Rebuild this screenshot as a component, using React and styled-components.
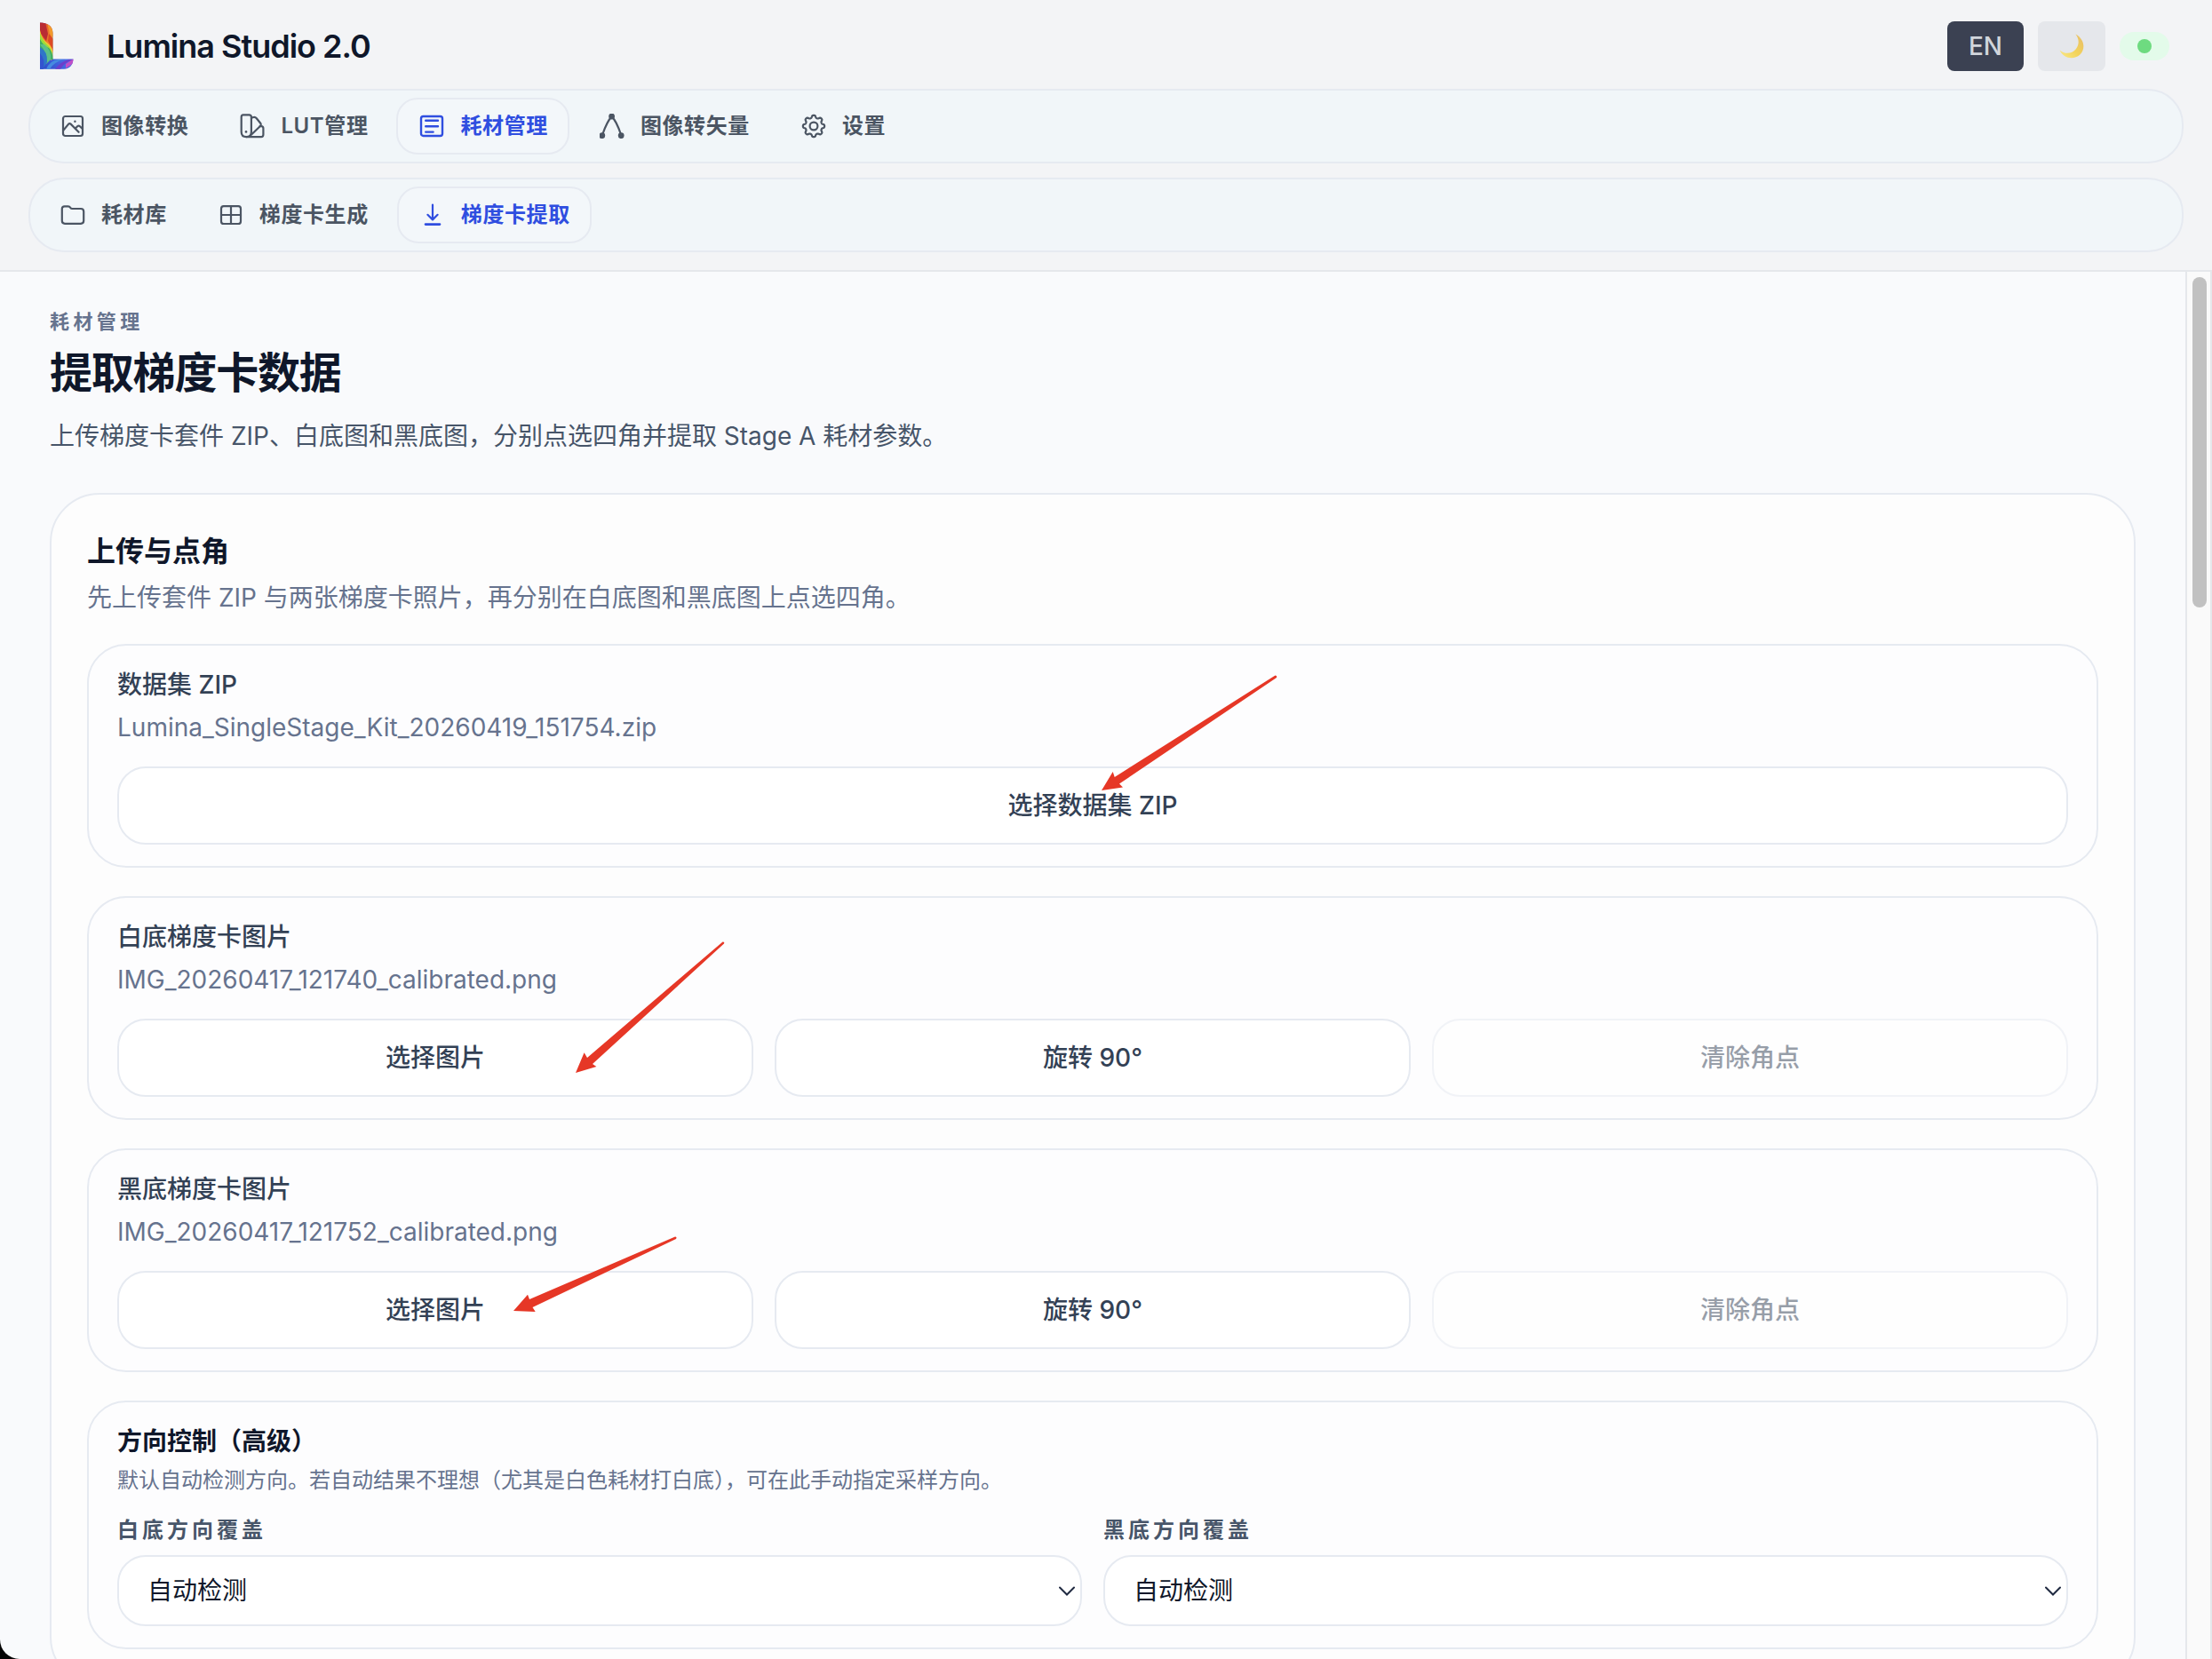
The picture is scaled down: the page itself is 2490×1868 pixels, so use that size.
import React, { useState } from "react";
import styled, { createGlobalStyle, css } from "styled-components";

const colors = {
  header: "#f3f4f6",
  nav: "#f1f6f9",
  navActive: "#f3f7fa",
  line: "#e6eaf1",
  divider: "#e5e7eb",
  page: "#f9fafc",
  card: "#fdfdfd",
  panel: "#fdfdfe",
  ink: "#0f172a",
  strong: "#334155",
  body: "#475569",
  muted: "#66738e",
  tab: "#4b5563",
  active: "#2f4ee0",
  arrow: "#e63726",
};

const GlobalStyle = createGlobalStyle`
  *, *::before, *::after { box-sizing: border-box; }
  body {
    margin: 0;
    background: #050505;
    color: ${colors.ink};
    font-family: Inter, "Noto Sans CJK SC", sans-serif;
    -webkit-font-smoothing: antialiased;
  }
  h1, h2, h3, p { margin: 0; }
  button, select { font: inherit; color: inherit; margin: 0; }
`;

/* ---------- shell ---------- */

const Shell = styled.div`
  position: relative;
  display: flex;
  flex-direction: column;
  height: 100vh;
  overflow: hidden;
  background: ${colors.page};
  border-bottom-left-radius: 22px;
`;

const Header = styled.header`
  display: flex;
  flex-direction: column;
  gap: 16px;
  padding: 24px 32px 20px;
  background: ${colors.header};
  border-bottom: 2px solid ${colors.divider};
`;

const TopRow = styled.div`
  display: flex;
  align-items: center;
  justify-content: space-between;
  padding: 0 16px 4px 0;
`;

const Brand = styled.div`
  display: flex;
  align-items: center;
  gap: 24px;
`;

const BrandName = styled.span`
  font-size: 36px;
  line-height: 56px;
  font-weight: 600;
  letter-spacing: -1px;
`;

const Actions = styled.div`
  display: flex;
  align-items: center;
  gap: 16px;
`;

const ActionButton = styled.button`
  display: flex;
  align-items: center;
  justify-content: center;
  height: 56px;
  padding: 0 24px;
  border: 0;
  border-radius: 8px;
  font-size: 28px;
  line-height: 40px;
  font-weight: 500;
  color: #d1d5db;
  background: ${(p) => (p.$dark ? "#3b4152" : "#e5e7eb")};
`;

const StatusPill = styled.span`
  display: flex;
  align-items: center;
  justify-content: center;
  width: 56px;
  height: 32px;
  border-radius: 16px;
  background: #e3fbea;
`;

const StatusDot = styled.span`
  width: 16px;
  height: 16px;
  border-radius: 50%;
  background: #6edb80;
`;

const NavBar = styled.nav`
  display: flex;
  gap: 8px;
  padding: 8px;
  border: 2px solid ${colors.line};
  border-radius: 40px;
  background: ${colors.nav};
`;

const NavItem = styled.button`
  display: flex;
  align-items: center;
  gap: 18px;
  height: 64px;
  padding: 0 22px 0 24px;
  border: 2px solid transparent;
  border-radius: 24px;
  background: transparent;
  color: ${colors.tab};
  font-size: 24px;
  line-height: 32px;
  font-weight: 600;
  letter-spacing: 0.025em;
  white-space: nowrap;

  ${(p) =>
    p.$active &&
    css`
      border-color: ${colors.line};
      background: ${colors.navActive};
      color: ${colors.active};
    `}
`;

/* ---------- page ---------- */

const Body = styled.div`
  display: flex;
  flex: 1;
  min-height: 0;
`;

const Main = styled.main`
  flex: 1;
  min-width: 0;
  overflow: hidden;
  padding: 40px 56px;
`;

const Track = styled.div`
  width: 30px;
  padding: 6px;
  border: solid ${colors.divider};
  border-width: 0 2px;
  background: #fafafa;
`;

const Thumb = styled.div`
  width: 16px;
  height: 24%;
  border-radius: 8px;
  background: #c1c1c1;
`;

const PageHead = styled.div`
  display: flex;
  flex-direction: column;
  margin-bottom: 40px;
`;

const Eyebrow = styled.p`
  font-size: 22px;
  line-height: 32px;
  font-weight: 600;
  letter-spacing: 0.2em;
  color: ${colors.muted};
`;

const PageTitle = styled.h1`
  padding: 12px 0 17px;
  font-size: 48px;
  line-height: 60px;
  font-weight: 700;
  letter-spacing: -0.025em;
`;

const Lead = styled.p`
  font-size: 28px;
  line-height: 48px;
  color: ${colors.body};
`;

const Card = styled.section`
  display: flex;
  flex-direction: column;
  gap: 32px;
  padding: 40px;
  border: 2px solid ${colors.line};
  border-radius: 56px;
  background: ${colors.card};
`;

const CardHead = styled.div`
  display: flex;
  flex-direction: column;
  gap: 8px;
`;

const CardTitle = styled.h2`
  font-size: 32px;
  line-height: 48px;
  font-weight: 600;
`;

const CardText = styled.p`
  font-size: 28px;
  line-height: 40px;
  color: ${colors.muted};
`;

const Panel = styled.div`
  display: flex;
  flex-direction: column;
  gap: 24px;
  padding: 24px 32px;
  border: 2px solid ${colors.line};
  border-radius: 44px;
  background: ${colors.panel};
`;

const PanelHead = styled.div`
  display: flex;
  flex-direction: column;
  gap: 8px;
`;

const PanelLabel = styled.h3`
  font-size: 28px;
  line-height: 40px;
  font-weight: ${(p) => (p.$bold ? 600 : 500)};
  color: ${(p) => (p.$bold ? colors.ink : colors.strong)};
`;

const PanelNote = styled.p`
  font-size: 24px;
  line-height: 32px;
  color: ${colors.muted};
`;

const Columns = styled.div`
  display: grid;
  grid-template-columns: repeat(${(p) => p.$count}, minmax(0, 1fr));
  gap: 24px;
`;

const WideButton = styled.button`
  height: 88px;
  padding: 0 32px;
  border: 2px solid ${colors.line};
  border-radius: 32px;
  background: #fff;
  color: ${colors.strong};
  font-size: 28px;
  line-height: 40px;
  font-weight: 500;

  &:disabled {
    opacity: 0.5;
  }
`;

const Field = styled.div`
  display: flex;
  flex-direction: column;
  gap: 12px;
`;

const FieldLabel = styled.label`
  font-size: 24px;
  line-height: 32px;
  font-weight: 600;
  letter-spacing: 4px;
  color: ${colors.body};
`;

const SelectBox = styled.div`
  position: relative;
`;

const Select = styled.select`
  display: block;
  width: 100%;
  height: 80px;
  padding: 0 48px 0 32px;
  appearance: none;
  border: 2px solid ${colors.line};
  border-radius: 32px;
  background: #fff;
  color: ${colors.ink};
  font-size: 28px;
  line-height: 40px;
`;

const SelectChevron = styled.svg`
  position: absolute;
  top: 50%;
  right: 8px;
  width: 18px;
  height: 12px;
  margin-top: -5px;
  pointer-events: none;
`;

const Annotations = styled.svg`
  position: absolute;
  top: 0;
  left: 0;
  width: 2490px;
  height: 1868px;
  pointer-events: none;
  fill: ${colors.arrow};
`;

/* ---------- drawings ---------- */

const IconSvg = styled.svg`
  flex: none;
  width: 28px;
  height: 28px;
  fill: none;
  stroke: currentColor;
  stroke-width: 2.2;
  stroke-linecap: round;
  stroke-linejoin: round;
`;

const gearOutline =
  Array.from({ length: 144 }, (_, i) => {
    const a = (i / 144) * Math.PI * 2;
    const r = 10.8 + 1.4 * Math.tanh(1.8 * Math.cos(8 * a));
    const x = (14 + r * Math.sin(a)).toFixed(2);
    const y = (14 - r * Math.cos(a)).toFixed(2);
    return `${i ? "L" : "M"}${x} ${y}`;
  }).join("") + "Z";

const icons = {
  image: (
    <>
      <rect x="3" y="3" width="22" height="22" rx="2.5" />
      <path d="M3.5 18.5 9.2 11.6Q10.4 10.4 11.6 11.6L20.6 20.8M16.8 16.6 19.4 14Q20.4 13.2 21.6 14L24.8 16.8" />
      <circle cx="16.4" cy="8.8" r="1.2" fill="currentColor" stroke="none" />
    </>
  ),
  swatch: (
    <>
      <path d="M3.8 1.4H10.4Q12.9 1.4 12.9 3.8V20.6Q12.9 26.2 7.3 26.2 1.7 26.2 1.7 20.6V3.8Q1.7 1.4 3.8 1.4Z" />
      <path d="M13.2 4.6 15.4 4Q17.4 3.6 18.8 5.2L23.4 11Q24.4 12.4 23.2 13.7L11.2 25.2" />
      <path d="M22.6 14.2H24Q26.4 14.2 26.4 16.6V23.6Q26.4 26.2 24 26.2H7.4" />
      <circle cx="7" cy="20.4" r="1.3" fill="currentColor" stroke="none" />
    </>
  ),
  form: (
    <>
      <rect x="2" y="3" width="24" height="22" rx="2.5" strokeWidth="2.4" />
      <path d="M7.2 7.8H21M7.2 14.2H21M7.2 20.6H15.6" strokeWidth="2.4" />
    </>
  ),
  vector: (
    <>
      <path d="M3 24Q8.6 8 13.6 3.4 18.8 8 24.2 24" />
      <g fill="currentColor" stroke="none">
        <circle cx="2.8" cy="24.7" r="3.4" />
        <circle cx="13.6" cy="3" r="3.4" />
        <circle cx="24.2" cy="24.7" r="3.4" />
      </g>
    </>
  ),
  gear: (
    <>
      <path d={gearOutline} />
      <circle cx="14" cy="14" r="4.4" />
    </>
  ),
  folder: (
    <path d="M1.8 7V20.6Q1.8 23.8 5 23.8H23Q26.2 23.8 26.2 20.6V10.2Q26.2 7 23 7H13.4Q12 7 11.2 5.8 10.3 4.3 8.8 4.3H4.6Q1.8 4.3 1.8 7Z" />
  ),
  grid: (
    <>
      <rect x="3" y="4.2" width="22" height="19.8" rx="2.8" />
      <path d="M14 4.2V24M3 14H25" />
    </>
  ),
  download: (
    <>
      <path d="M14 2.6V19M8.4 13.8 14 19.4 19.6 13.8" />
      <path d="M6 24.6H22" strokeWidth="2.6" />
    </>
  ),
};

function Icon({ name }) {
  return (
    <IconSvg viewBox="0 0 28 28" aria-hidden="true">
      {icons[name]}
    </IconSvg>
  );
}

function Logo() {
  return (
    <svg width="64" height="56" viewBox="32 24 64 56" aria-hidden="true">
      <defs>
        <clipPath id="logo-shape">
          <path d="M45 25.6C52 25.4 59.4 28.6 59.4 37V66.6H82.4C82.4 73 78.6 77.8 72 77.8H45Z" />
        </clipPath>
        <linearGradient id="logo-foot" x1="0" x2="1" y1="1" y2="0">
          <stop offset="0" stopColor="#2a48c4" />
          <stop offset="0.5" stopColor="#4a6fe8" />
          <stop offset="0.7" stopColor="#6a3cc0" />
          <stop offset="1" stopColor="#b04fd0" />
        </linearGradient>
        <linearGradient id="logo-stem" x1="0" x2="1" y1="0" y2="0.4">
          <stop offset="0" stopColor="#d43a2c" />
          <stop offset="0.5" stopColor="#e5602a" />
          <stop offset="1" stopColor="#f0a030" />
        </linearGradient>
      </defs>
      <g clipPath="url(#logo-shape)">
        <rect x="45" y="25" width="38" height="53" fill="url(#logo-foot)" />
        <path d="M45 25H60V60L45 40Z" fill="url(#logo-stem)" />
        <path d="M45 26 51 25 54 38 52 46 45 36Z" fill="#b92c34" />
        <path d="M53 25 60 30V42L56 38Z" fill="#f39a2c" />
        <path d="M60 44 55 38 54 46 60 58Z" fill="#dd4a26" />
        <path d="M45 34Q47 44 54 49 60 54 60 62L58 68 45 56Z" fill="#f2c832" />
        <path d="M45 37Q48 46 54 51 59 56 60 67H54L45 58Z" fill="#9bdc3c" />
        <path d="M45 44Q49 52 55 54 59 58 60 67H52L45 60Z" fill="#3fae62" />
        <path d="M50 50Q58 56 57 67L52 72Q54 60 45 50Z" fill="#5cc088" />
        <path d="M45 53Q54 58 53 70L48 78H45Z" fill="#2f76c8" />
        <path d="M45 60Q51 66 49 78H45Z" fill="#3353cf" />
        <path d="M52 78Q56 68 66 67H72Q60 70 56 78Z" fill="#458be0" />
        <path d="M62 78Q68 69 78 67H83Q72 70 68 78Z" fill="#6b3fcb" />
        <path d="M74 72 83 66V71L74 77Z" fill="#c04fc8" />
      </g>
    </svg>
  );
}

function Moon() {
  return (
    <svg width="28" height="28" viewBox="0 0 28 28" aria-hidden="true">
      <defs>
        <linearGradient id="moon-fill" x1="0.2" x2="0.9" y1="0.9" y2="0.3">
          <stop offset="0" stopColor="#f7e27a" />
          <stop offset="0.5" stopColor="#f3d35a" />
          <stop offset="1" stopColor="#ebc565" />
        </linearGradient>
      </defs>
      <path
        d="M18.4 0.4C29 6 29.6 17.6 23.4 23.4 16 30 4.6 27.6 0.6 18.4 6.4 23.4 14.4 22.6 18.8 17.2 23 12 22.4 5.4 18.4 0.4Z"
        fill="url(#moon-fill)"
      />
    </svg>
  );
}

/* ---------- composed parts ---------- */

const sections = [
  { icon: "image", label: "图像转换" },
  { icon: "swatch", label: "LUT管理" },
  { icon: "form", label: "耗材管理" },
  { icon: "vector", label: "图像转矢量" },
  { icon: "gear", label: "设置" },
];

const pages = [
  { icon: "folder", label: "耗材库" },
  { icon: "grid", label: "梯度卡生成" },
  { icon: "download", label: "梯度卡提取" },
];

function Tabs({ items, initial, label }) {
  const [current, setCurrent] = useState(initial);
  return (
    <NavBar aria-label={label}>
      {items.map((item) => (
        <NavItem
          key={item.label}
          type="button"
          $active={item.label === current}
          aria-current={item.label === current ? "page" : undefined}
          onClick={() => setCurrent(item.label)}
        >
          <Icon name={item.icon} />
          {item.label}
        </NavItem>
      ))}
    </NavBar>
  );
}

function UploadPanel({ title, file, children, count }) {
  return (
    <Panel>
      <PanelHead>
        <PanelLabel>{title}</PanelLabel>
        <CardText>{file}</CardText>
      </PanelHead>
      <Columns $count={count}>{children}</Columns>
    </Panel>
  );
}

function DirectionField({ id, label }) {
  return (
    <Field>
      <FieldLabel htmlFor={id}>{label}</FieldLabel>
      <SelectBox>
        <Select id={id} defaultValue="auto">
          <option value="auto">自动检测</option>
        </Select>
        <SelectChevron viewBox="0 0 18 12" aria-hidden="true">
          <path
            d="M1 1.5 9 9.5 17 1.5"
            fill="none"
            stroke="#1f2940"
            strokeWidth="2"
            strokeLinecap="round"
          />
        </SelectChevron>
      </SelectBox>
    </Field>
  );
}

export default function App() {
  return (
    <>
      <GlobalStyle />
      <Shell>
        <Header>
          <TopRow>
            <Brand>
              <Logo />
              <BrandName>Lumina Studio 2.0</BrandName>
            </Brand>
            <Actions>
              <ActionButton type="button" $dark>
                EN
              </ActionButton>
              <ActionButton type="button" aria-label="主题">
                <Moon />
              </ActionButton>
              <StatusPill>
                <StatusDot />
              </StatusPill>
            </Actions>
          </TopRow>
          <Tabs items={sections} initial="耗材管理" label="主导航" />
          <Tabs items={pages} initial="梯度卡提取" label="子导航" />
        </Header>

        <Body>
          <Main>
            <PageHead>
              <Eyebrow>耗材管理</Eyebrow>
              <PageTitle>提取梯度卡数据</PageTitle>
              <Lead>
                上传梯度卡套件 ZIP、白底图和黑底图，分别点选四角并提取 Stage A 耗材参数。
              </Lead>
            </PageHead>

            <Card>
              <CardHead>
                <CardTitle>上传与点角</CardTitle>
                <CardText>
                  先上传套件 ZIP 与两张梯度卡照片，再分别在白底图和黑底图上点选四角。
                </CardText>
              </CardHead>

              <UploadPanel
                title="数据集 ZIP"
                file="Lumina_SingleStage_Kit_20260419_151754.zip"
                count={1}
              >
                <WideButton type="button">选择数据集 ZIP</WideButton>
              </UploadPanel>

              <UploadPanel
                title="白底梯度卡图片"
                file="IMG_20260417_121740_calibrated.png"
                count={3}
              >
                <WideButton type="button">选择图片</WideButton>
                <WideButton type="button">旋转 90°</WideButton>
                <WideButton type="button" disabled>
                  清除角点
                </WideButton>
              </UploadPanel>

              <UploadPanel
                title="黑底梯度卡图片"
                file="IMG_20260417_121752_calibrated.png"
                count={3}
              >
                <WideButton type="button">选择图片</WideButton>
                <WideButton type="button">旋转 90°</WideButton>
                <WideButton type="button" disabled>
                  清除角点
                </WideButton>
              </UploadPanel>

              <Panel>
                <PanelHead>
                  <PanelLabel $bold>方向控制（高级）</PanelLabel>
                  <PanelNote>
                    默认自动检测方向。若自动结果不理想（尤其是白色耗材打白底），可在此手动指定采样方向。
                  </PanelNote>
                </PanelHead>
                <Columns $count={2}>
                  <DirectionField id="white-direction" label="白底方向覆盖" />
                  <DirectionField id="black-direction" label="黑底方向覆盖" />
                </Columns>
              </Panel>
            </Card>
          </Main>
          <Track>
            <Thumb />
          </Track>
        </Body>

        <Annotations viewBox="0 0 2490 1868" aria-hidden="true">
          <path d="M1240 890 1252.7 869 1254.7 875 1435.5 760.5Q1438 761 1437 763L1260 882.5 1264 886.5Z" />
          <path d="M648 1208 657.6 1185.3 661 1191 813.5 1060.5Q816 1060.5 815 1062.5L667 1198 671.4 1201Z" />
          <path d="M578 1476 594 1457.7 596 1463 760 1392.5Q762.5 1393 761 1395L599.5 1472 602.7 1477Z" />
        </Annotations>
      </Shell>
    </>
  );
}
